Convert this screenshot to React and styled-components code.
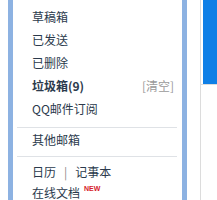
import React from "react";
import styled, { createGlobalStyle } from "styled-components";

const GlobalStyle = createGlobalStyle`
  html, body {
    margin: 0;
    padding: 0;
    background: #ffffff;
  }
  body {
    font-family: "Microsoft YaHei", "Noto Sans CJK SC", "Liberation Sans", sans-serif;
  }
`;

const Page = styled.div`
  display: flex;
  height: 200px;
  width: 217px;
  overflow: hidden;
  padding-left: 8px;
  box-sizing: border-box;
`;

const Sidebar = styled.div`
  width: 169px;
  flex-shrink: 0;
  border-left: 5px solid #8db2e2;
  border-right: 5px solid #8db2e2;
  padding-top: 5px;
  background: #ffffff;
`;

const Row = styled.div`
  display: flex;
  align-items: center;
  justify-content: space-between;
  height: ${(props) => props.h || 23}px;
  padding: 0 8px 0 19px;
  font-size: 12px;
  color: #2b3a4c;
  font-weight: ${(props) => (props.bold ? 700 : 400)};
  white-space: nowrap;
`;

const Label = styled.span`
  display: flex;
  align-items: center;
`;

const Clear = styled.span`
  color: #9a9a9a;
  font-weight: 400;
`;

const Pipe = styled.span`
  color: #8a8a8a;
  margin: 0 8px;
`;

const New = styled.sup`
  color: #d6202a;
  font-size: 7px;
  font-weight: 700;
  font-family: "Liberation Sans", Arial, sans-serif;
  margin-left: 4px;
  position: relative;
  top: -4px;
  vertical-align: baseline;
`;

const Separator = styled.div`
  height: 1px;
  background: #dfe2e6;
  margin: ${(props) => props.m};
  margin-left: 4px;
  margin-right: 5px;
`;

const Gap = styled.div`
  width: 13px;
  flex-shrink: 0;
`;

const Main = styled.div`
  flex: 1;
  border-left: 1px solid #dcdcdc;
`;

const Banner = styled.div`
  height: 84px;
  border-bottom: 1px solid #dcdcdc;
  padding-left: 2px;
`;

const BlueBlock = styled.div`
  height: 84px;
  background: #0f7fe6;
`;

export default function App() {
  return (
    <>
      <GlobalStyle />
      <Page>
        <Sidebar>
          <Row>草稿箱</Row>
          <Row>已发送</Row>
          <Row>已删除</Row>
          <Row bold>
            <Label>垃圾箱(9)</Label>
            <Clear>[清空]</Clear>
          </Row>
          <Row>QQ邮件订阅</Row>
          <Separator m="7px 0 0" />
          <Row>其他邮箱</Row>
          <Separator m="5px 0 3px" />
          <Row h={22}>
            <Label>
              日历<Pipe>|</Pipe>记事本
            </Label>
          </Row>
          <Row h={21}>
            <Label>
              在线文档<New>NEW</New>
            </Label>
          </Row>
        </Sidebar>
        <Gap />
        <Main>
          <Banner>
            <BlueBlock />
          </Banner>
        </Main>
      </Page>
    </>
  );
}
